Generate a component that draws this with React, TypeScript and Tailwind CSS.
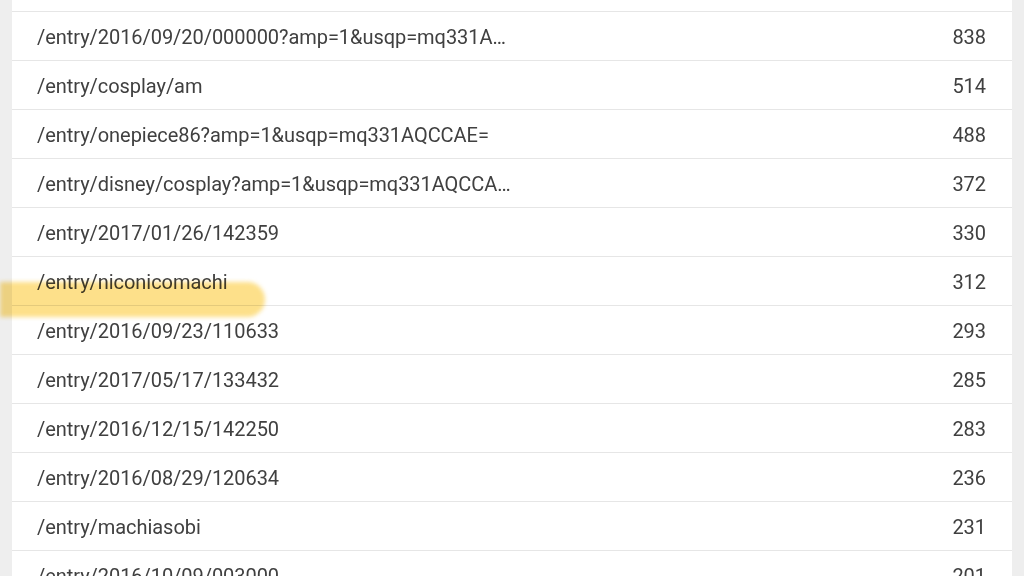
const rows: { path: string; count: number }[] = [
  { path: "/entry/2016/09/20/000000?amp=1&usqp=mq331A…", count: 838 },
  { path: "/entry/cosplay/am", count: 514 },
  { path: "/entry/onepiece86?amp=1&usqp=mq331AQCCAE=", count: 488 },
  { path: "/entry/disney/cosplay?amp=1&usqp=mq331AQCCA…", count: 372 },
  { path: "/entry/2017/01/26/142359", count: 330 },
  { path: "/entry/niconicomachi", count: 312 },
  { path: "/entry/2016/09/23/110633", count: 293 },
  { path: "/entry/2017/05/17/133432", count: 285 },
  { path: "/entry/2016/12/15/142250", count: 283 },
  { path: "/entry/2016/08/29/120634", count: 236 },
  { path: "/entry/machiasobi", count: 231 },
  { path: "/entry/2016/10/09/003000", count: 201 },
];

export default function App() {
  return (
    <div
      className="relative flex h-[576px] w-[1024px] overflow-hidden bg-[#eeeeee] px-[12px]"
      style={{ fontFamily: "Roboto, 'Liberation Sans', sans-serif" }}
    >
      <div className="flex-1 bg-white">
        {/* abgeschnittene Kopfzeile */}
        <div className="h-[11px]" />
        {rows.map((r) => (
          <div
            key={r.path}
            className="flex h-[49px] items-center justify-between border-t border-[#e6e6e6] pl-[25px] pr-[26px] pt-px text-[20px] leading-[28px] tracking-[-0.05px] text-[#404040]"
          >
            <span className="whitespace-nowrap">{r.path}</span>
            <span className="tabular-nums">{r.count}</span>
          </div>
        ))}
      </div>

      {/* Textmarker */}
      <div className="pointer-events-none absolute left-0 top-[282px] h-[35px] w-[265px] rounded-r-[18px] bg-[#fcd663]/75 mix-blend-multiply blur-[2px]" />
    </div>
  );
}
